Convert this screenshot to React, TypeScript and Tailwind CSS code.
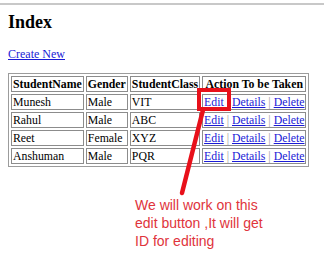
const students = [
  { name: "Munesh", gender: "Male", cls: "VIT" },
  { name: "Rahul", gender: "Male", cls: "ABC" },
  { name: "Reet", gender: "Female", cls: "XYZ" },
  { name: "Anshuman", gender: "Male", cls: "PQR" },
];

const serif = "font-['Liberation_Serif','Times_New_Roman',serif]";
const cell = "h-[16px] border border-[#8c8c8c] px-[1px] py-0 leading-[14px] whitespace-nowrap";

function Actions() {
  return (
    <span className="whitespace-nowrap">
      <a href="#" className="text-[#1a1ad6] underline">Edit</a>
      <span className="text-[#9a9a9a]"> | </span>
      <a href="#" className="text-[#1a1ad6] underline">Details</a>
      <span className="text-[#9a9a9a]"> | </span>
      <a href="#" className="text-[#1a1ad6] underline">Delete</a>
    </span>
  );
}

export default function App() {
  return (
    <div className={`relative h-[260px] w-[324px] overflow-hidden bg-white text-black ${serif}`}>
      <div className="mt-[3px] h-[2px] bg-[#c8c8c8]" />

      <div className="px-[8px]">
        <h2 className="mt-[7px] text-[18px] font-bold leading-[20px]">Index</h2>
        <a href="#" className="mt-[15px] block w-fit text-[12px] leading-[14px] text-[#1a1ad6] underline">
          Create New
        </a>

        <table className="mt-[12px] border-separate border-spacing-[2px] border border-[#9c9c9c] text-[11.8px]">
          <thead>
            <tr>
              <th className={`${cell} font-bold`}>StudentName</th>
              <th className={`${cell} font-bold`}>Gender</th>
              <th className={`${cell} font-bold`}>StudentClass</th>
              <th className={`${cell} font-bold`}>Action To be Taken</th>
            </tr>
          </thead>
          <tbody>
            {students.map((s) => (
              <tr key={s.name}>
                <td className={cell}>{s.name}</td>
                <td className={cell}>{s.gender}</td>
                <td className={cell}>{s.cls}</td>
                <td className={cell}><Actions /></td>
              </tr>
            ))}
          </tbody>
        </table>

        <p className="ml-[127px] mt-[29px] font-['Liberation_Sans',Arial,sans-serif] text-[14px] leading-[18px] text-[#e0343c]">
          We will work on this
          <br />
          edit button ,It will get
          <br />
          ID for editing
        </p>
      </div>

      {/* annotation: box round the first Edit link and the pointer line */}
      <svg className="pointer-events-none absolute left-0 top-0" width="324" height="260">
        <rect x="199" y="90" width="30" height="19" fill="none" stroke="#e8101a" strokeWidth="4" />
        <line x1="203" y1="110" x2="182" y2="193" stroke="#e8101a" strokeWidth="4.5" strokeLinecap="round" />
      </svg>
    </div>
  );
}
